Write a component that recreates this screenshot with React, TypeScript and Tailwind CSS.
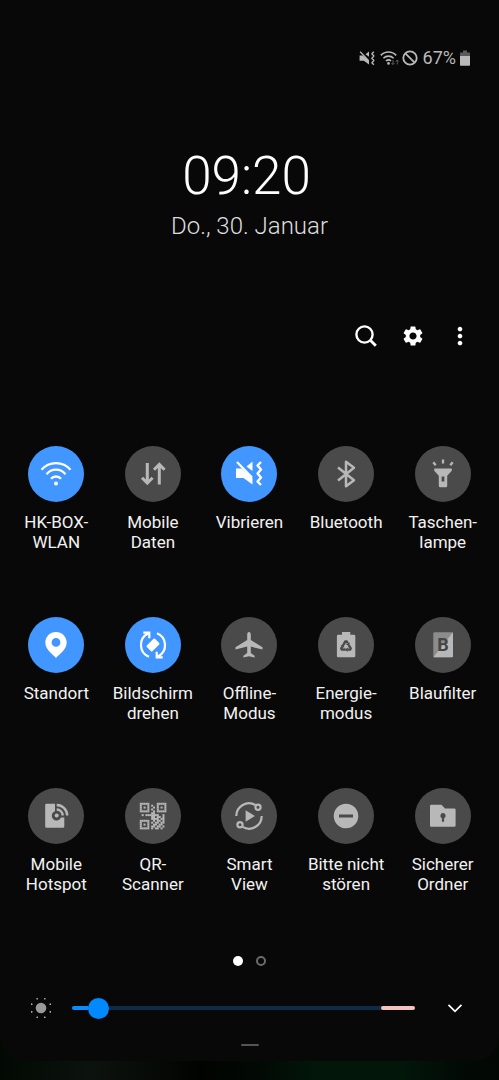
import React, { useState } from "react";
import { MdMoreVert, MdSettings } from "react-icons/md";

interface Tile {
  label: string;
  icon: React.ReactNode;
  active?: boolean;
}

const QR_ROWS = [
  "#####....#####",
  "#...#.#..#...#",
  "#.#.#..#.#.#.#",
  "#...#.#..#...#",
  "#####..#.#####",
  "......##......",
  ".#.#######..#.",
  "......##.##.#.",
  "......####.##.",
  "#####..#.##.#.",
  "#...#.#.##.##.",
  "#.#.#..##.##..",
  "#...#.##.##.#.",
  "#####.#.##.#..",
];

const VibrateShape = () => (
  <>
    <path d="M15 22.5h5.5l11 9.5v6.5L22.5 32H15zM25.5 20.5l6-5v9.5z" fill="currentColor" />
    <path d="M16 16l15 15.5" stroke="currentColor" strokeWidth="2.2" />
    <path
      d="M40 16l-3.5 3.5L40 23.5l-3.5 4L40 31.5 36.5 35.5 40 39"
      fill="none"
      stroke="currentColor"
      strokeWidth="2.4"
      strokeLinejoin="round"
    />
  </>
);

const TILES: Tile[] = [
  {
    label: "HK-BOX-\nWLAN",
    active: true,
    icon: (
      <>
        <g fill="none" stroke="currentColor" strokeWidth="2.3">
          <path d="M13.5 23.8a19 19 0 0 1 29 0" />
          <path d="M18.5 28.3a12 12 0 0 1 19 0" />
          <path d="M23 32.8a6.6 6.6 0 0 1 10 0" />
        </g>
        <circle cx="28" cy="37.5" r="2" fill="currentColor" />
      </>
    ),
  },
  {
    label: "Mobile\nDaten",
    icon: (
      <g fill="none" stroke="currentColor" strokeWidth="3">
        <path d="M22.3 17v20M17 31.8l5.3 5.3 5.3-5.3" />
        <path d="M34.3 38.5v-19M29 23.7l5.3-5.3 5.3 5.3" />
      </g>
    ),
  },
  { label: "Vibrieren", active: true, icon: <VibrateShape /> },
  {
    label: "Bluetooth",
    icon: (
      <path
        d="M20 21.5l16 12.8-8 6V15.7l8 6L20 34.5"
        fill="none"
        stroke="currentColor"
        strokeWidth="2.5"
        strokeLinejoin="round"
      />
    ),
  },
  {
    label: "Taschen-\nlampe",
    icon: (
      <>
        <path
          d="M19.2 22.5h17.6v2.2l-4.6 5v10.1a1.5 1.5 0 0 1-1.5 1.5h-5.4a1.5 1.5 0 0 1-1.5-1.5V29.7l-4.6-5zM26.6 30.5v5h2.8v-5z"
          fill="currentColor"
          fillRule="evenodd"
        />
        <path
          d="M28 13.5v4M18.3 16.3l2.4 3M37.7 16.3l-2.4 3"
          stroke="currentColor"
          strokeWidth="2.3"
        />
      </>
    ),
  },
  {
    label: "Standort",
    active: true,
    icon: (
      <path
        d="M28 15c-6 0-10.7 4.7-10.7 10.5C17.3 32.5 24 36.5 28 41c4-4.5 10.7-8.5 10.7-15.5C38.7 19.7 34 15 28 15zm0 6a4.4 4.4 0 1 1 0 8.8 4.4 4.4 0 0 1 0-8.8z"
        fill="currentColor"
        fillRule="evenodd"
      />
    ),
  },
  {
    label: "Bildschirm\ndrehen",
    active: true,
    icon: (
      <>
        <g fill="none" stroke="currentColor" strokeWidth="2.2">
          <path d="M24 39.8A12.8 12.8 0 0 1 23 16.5M18.3 15.7h6v5.5" />
          <path d="M32 16.2A12.8 12.8 0 0 1 33 39.5M37.7 40.3h-6v-5.5" />
        </g>
        <rect
          x="22.2"
          y="24"
          width="11.6"
          height="8"
          rx="1"
          transform="rotate(-45 28 28)"
          fill="currentColor"
        />
      </>
    ),
  },
  {
    label: "Offline-\nModus",
    icon: (
      <path
        d="M28 15c1.2 0 1.8 1.1 1.8 2.4v5.6l11.7 7.2v2.4L29.8 29.6v6.5l3.8 2.6v1.7L28 39.3l-5.6 1.1v-1.7l3.8-2.6v-6.5l-11.7 3v-2.4L26.2 23v-5.6c0-1.3.6-2.4 1.8-2.4z"
        fill="currentColor"
      />
    ),
  },
  {
    label: "Energie-\nmodus",
    icon: (
      <>
        <path
          d="M24 15h8.3v2.7h3.7a1.3 1.3 0 0 1 1.3 1.3v20a1.3 1.3 0 0 1-1.3 1.3H20.2a1.3 1.3 0 0 1-1.3-1.3V19a1.3 1.3 0 0 1 1.3-1.3H24z"
          fill="currentColor"
        />
        {[0, 120, 240].map((angle) => (
          <g key={angle} transform={`rotate(${angle} 28 29.5)`}>
            <path
              d="M25.6 27.6l1.7-3.2h1.4l1 1.8"
              fill="none"
              stroke="#4a4a4a"
              strokeWidth="2.4"
              strokeLinejoin="round"
            />
            <path d="M27.9 27.4l3.7-2.1v3.9z" fill="#4a4a4a" />
          </g>
        ))}
      </>
    ),
  },
  {
    label: "Blaufilter",
    icon: (
      <>
        <rect x="18.3" y="15.3" width="19.7" height="25" rx="1.3" fill="#8c8c8c" />
        <path d="M38 15.3V39a1.3 1.3 0 0 1-1.3 1.3H18.3z" fill="currentColor" />
        <text
          x="28"
          y="33.8"
          textAnchor="middle"
          fontSize="18"
          fontWeight="700"
          fill="#454545"
        >
          B
        </text>
      </>
    ),
  },
  {
    label: "Mobile\nHotspot",
    icon: (
      <>
        <path
          d="M18.5 15.7H27v7.5a4.8 4.8 0 1 0 6 6.3h3.3v8.9a1.3 1.3 0 0 1-1.3 1.3H18.5a1.3 1.3 0 0 1-1.3-1.3V17a1.3 1.3 0 0 1 1.3-1.3z"
          fill="currentColor"
        />
        <circle cx="28.7" cy="27.5" r="2" fill="currentColor" />
        <path
          d="M28.7 21.5a6 6 0 0 1 6 6M28.7 17a10.5 10.5 0 0 1 10.5 10.5"
          fill="none"
          stroke="currentColor"
          strokeWidth="2.4"
        />
      </>
    ),
  },
  {
    label: "QR-\nScanner",
    icon: (
      <g transform="translate(14.8 14.8) scale(1.89)" fill="currentColor">
        {QR_ROWS.map((row, y) =>
          row
            .split("")
            .map((cell, x) =>
              cell === "#" ? (
                <rect key={`${x}-${y}`} x={x} y={y} width="1.05" height="1.05" />
              ) : null
            )
        )}
      </g>
    ),
  },
  {
    label: "Smart\nView",
    icon: (
      <>
        <g fill="none" stroke="currentColor" strokeWidth="2.2">
          <path d="M15.3 28A12.7 12.7 0 0 1 34.5 17.1" />
          <path d="M40.7 28A12.7 12.7 0 0 1 21.5 38.9" />
          <circle cx="37" cy="19.3" r="2.6" />
          <circle cx="19" cy="36.7" r="2.6" />
        </g>
        <path d="M24.6 22.2v11.6l9.3-5.8z" fill="currentColor" />
      </>
    ),
  },
  {
    label: "Bitte nicht\nstören",
    icon: (
      <path
        d="M28 15.7a12.3 12.3 0 1 1 0 24.6 12.3 12.3 0 0 1 0-24.6zM21 26.4v3.2h14v-3.2z"
        fill="currentColor"
        fillRule="evenodd"
      />
    ),
  },
  {
    label: "Sicherer\nOrdner",
    icon: (
      <>
        <path
          d="M16.3 16.7H26.5l3.5 3.8h9.3a1.3 1.3 0 0 1 1.3 1.3v15.6a1.3 1.3 0 0 1-1.3 1.3h-23a1.3 1.3 0 0 1-1.3-1.3V18a1.3 1.3 0 0 1 1.3-1.3z"
          fill="currentColor"
        />
        <path
          d="M28 25a2.8 2.8 0 0 1 1.1 5.3v3.5h-2.2v-3.5A2.8 2.8 0 0 1 28 25z"
          fill="#4a4a4a"
        />
      </>
    ),
  },
];

const StatusBar = () => (
  <div className="h-5 pr-[29px] flex justify-end items-center text-[#b9b9b9]">
    <svg viewBox="13 13 30 28" className="w-[18px] h-4" aria-hidden="true">
      <VibrateShape />
    </svg>
    <svg viewBox="0 0 20 16" className="w-5 h-4 ml-1" aria-hidden="true">
      <g fill="none" stroke="currentColor" strokeWidth="1.6">
        <path d="M.8 5.4a10.5 10.5 0 0 1 15.4 0" />
        <path d="M3.4 8.3a7 7 0 0 1 10.2 0" />
        <path d="M6 11a3.6 3.6 0 0 1 5 0" />
      </g>
      <circle cx="8.5" cy="13.4" r="1.3" fill="currentColor" />
      <path
        d="M13 10v4.5M11.5 13l1.5 1.5 1.5-1.5M17.3 14.5V10M15.8 11.5l1.5-1.5 1.5 1.5"
        fill="none"
        stroke="#5c5c5c"
      />
    </svg>
    <svg viewBox="0 0 16 16" className="w-4 h-4 ml-0.5" aria-hidden="true">
      <circle cx="8" cy="8" r="6.7" fill="none" stroke="currentColor" strokeWidth="1.8" />
      <path d="M3.3 3.3l9.4 9.4" stroke="currentColor" strokeWidth="1.8" />
    </svg>
    <span className="ml-[5px] text-lg leading-5">67%</span>
    <svg viewBox="0 0 10 16" className="w-2.5 h-4 ml-1" aria-hidden="true">
      <path d="M3 .5h4v2h3v4H0v-4h3z" fill="#5a5a5a" />
      <path d="M0 6h10v9a.7.7 0 0 1-.7.7H.7A.7.7 0 0 1 0 15z" fill="currentColor" />
    </svg>
  </div>
);

const QuickTile: React.FC<{ tile: Tile }> = ({ tile }) => {
  const [active, setActive] = useState(!!tile.active);

  return (
    <button
      type="button"
      aria-pressed={active}
      onClick={() => setActive(!active)}
      className="flex flex-col items-center gap-2.5"
    >
      <span
        className={
          active
            ? "w-14 h-14 rounded-full bg-[#4196ff] text-white"
            : "w-14 h-14 rounded-full bg-[#4a4a4a] text-[#b8b8b8]"
        }
      >
        <svg viewBox="0 0 56 56" className="w-14 h-14" aria-hidden="true">
          {tile.icon}
        </svg>
      </span>
      <span className="h-10 text-[17px] leading-5 text-[#f2f2f2] whitespace-pre-line">
        {tile.label}
      </span>
    </button>
  );
};

const BrightnessSlider = () => {
  const [value, setValue] = useState(5);

  return (
    <div className="pl-7 pr-8 flex items-center">
      <svg viewBox="0 0 26 24" className="w-[26px] h-6 text-[#999999]" aria-hidden="true">
        <circle cx="13" cy="12" r="5.3" fill="currentColor" />
        {[0, 1, 2, 3, 4, 5, 6, 7].map((i) => (
          <circle
            key={i}
            cx="23"
            cy="12"
            r="0.8"
            fill="#c4c4c4"
            transform={`rotate(${22.5 + i * 45} 13 12)`}
          />
        ))}
      </svg>
      <div className="relative grow ml-[18px] mr-[31px] h-6 flex items-center">
        <div className="absolute inset-x-0 h-1 rounded-full bg-[#102b47]" />
        <div className="absolute right-0 w-1/10 h-1 rounded-full bg-[#f5c2bf]" />
        <div
          className="absolute left-0 h-1 rounded-full bg-[#0a8cff]"
          style={{ width: `${value}%` }}
        />
        <input
          type="range"
          aria-label="Helligkeit"
          min={0}
          max={100}
          value={value}
          onChange={(e) => setValue(Number(e.target.value))}
          className="relative w-full h-6 appearance-none bg-transparent [&::-webkit-slider-thumb]:appearance-none [&::-webkit-slider-thumb]:w-[21px] [&::-webkit-slider-thumb]:h-[21px] [&::-webkit-slider-thumb]:rounded-full [&::-webkit-slider-thumb]:bg-[#018aff]"
        />
      </div>
      <button type="button" aria-label="Mehr anzeigen" className="w-[21px] h-6">
        <svg viewBox="0 0 21 24" className="w-[21px] h-6" aria-hidden="true">
          <path d="M2.5 8.800l6.500 6.500 6.500-6.500" fill="none" stroke="#fff" strokeWidth="1.700" />
        </svg>
      </button>
    </div>
  );
};

const App = () => {
  return (
    <div className="min-h-screen font-['Roboto',sans-serif] text-white bg-[#020503] bg-[linear-gradient(90deg,#020903_0%,#0c120d_18%,#080c08_28%,#010301_40%,#020904_52%,#02170a_64%,#02170a_80%,#020a05_92%,#020703_100%)]">
      <main className="pt-12 pb-[15px] mb-[19px] rounded-b-3xl bg-[#080808]">
        <StatusBar />

        <header className="mt-20 text-center">
          <h1 className="pr-1.5 text-[53px] leading-14 font-light">09:20</h1>
          <p className="mt-1.5 text-2xl leading-8 font-light text-[#dedede]">
            Do., 30. Januar
          </p>
        </header>

        <div className="mt-[74px] pr-[19px] flex justify-end gap-[7px]">
          <button type="button" aria-label="Suche" className="w-10 h-10 flex items-center justify-center">
            <svg viewBox="0 0 24 24" className="w-6 h-6" aria-hidden="true">
              <circle cx="10.5" cy="10.5" r="8.1" fill="none" stroke="#fff" strokeWidth="2.4" />
              <path d="M16.3 16.3l5.5 5.5" stroke="#fff" strokeWidth="2.8" />
            </svg>
          </button>
          <button type="button" aria-label="Einstellungen" className="w-10 h-10 flex items-center justify-center">
            <MdSettings className="w-6 h-6" />
          </button>
          <button type="button" aria-label="Weitere Optionen" className="w-10 h-10 flex items-center justify-center">
            <MdMoreVert className="w-7 h-7" />
          </button>
        </div>

        <div className="mt-[90px] px-2 grid grid-cols-5 gap-y-[65px]">
          {TILES.map((tile) => (
            <QuickTile key={tile.label} tile={tile} />
          ))}
        </div>

        <nav className="mt-[62px] flex justify-center gap-[13px]">
          <button
            type="button"
            aria-label="Seite 1"
            aria-current="page"
            className="w-2.5 h-2.5 rounded-full bg-white"
          />
          <button
            type="button"
            aria-label="Seite 2"
            className="w-2.5 h-2.5 rounded-full border-2 border-[#6b6b6b]"
          />
        </nav>

        <div className="mt-[30px]">
          <BrightnessSlider />
        </div>

        <div className="mt-6 mx-auto w-[18px] h-0.5 rounded-full bg-[#555555]" />
      </main>
    </div>
  );
};

export default App;
